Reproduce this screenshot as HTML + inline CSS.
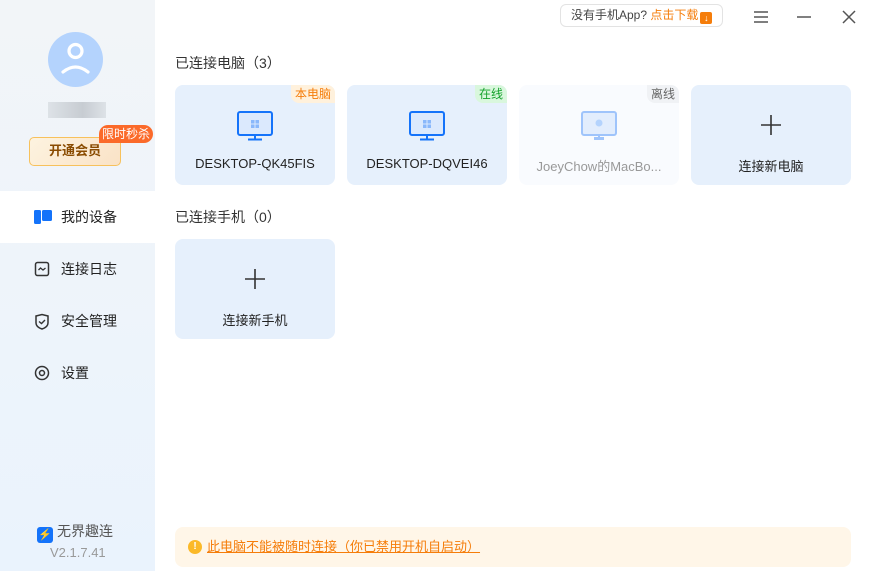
<!DOCTYPE html>
<html><head><meta charset="utf-8"><style>
*{margin:0;padding:0;box-sizing:border-box}
body{width:872px;height:571px;overflow:hidden;background:#fff;font-family:"Liberation Sans","Noto Sans CJK SC",sans-serif;position:relative;color:#222}
.side{position:absolute;left:0;top:0;width:155px;height:571px;background:linear-gradient(#f2f5f8,#eaf3fd)}
.abs{position:absolute}
.card{position:absolute;width:160px;height:100px;border-radius:8px;background:#e6f0fc;text-align:center}
.card .name{position:absolute;left:0;right:0;top:71px;font-size:13px;color:#222}
.tag{position:absolute;right:0;top:0;font-size:12px;padding:0 4px;height:18px;line-height:18px;border-radius:0 8px 0 8px}
.nav{position:absolute;left:0;width:155px;height:52px;font-size:14px;line-height:52px;padding-left:61px;color:#222}
.nav svg{position:absolute;left:34px;top:18px}
.h{position:absolute;left:175px;font-size:14px;color:#333}
</style></head><body>
<div class="side"></div>
<svg class="abs" style="left:48px;top:32px" width="55" height="55" viewBox="0 0 55 55"><circle cx="27.5" cy="27.5" r="27.5" fill="#b4d3fd"/><circle cx="27.5" cy="19" r="6.5" fill="none" stroke="#fff" stroke-width="3.2"/><path d="M15 40 Q27.5 30 40 40" fill="none" stroke="#fff" stroke-width="3.2" stroke-linecap="round"/></svg>
<div class="abs" style="left:48px;top:102px;width:58px;height:16px;background:linear-gradient(90deg,#dde2e7,#c7ccd2 60%,#dde2e7)"></div>
<div class="abs" style="left:29px;top:137px;width:92px;height:29px;border:1.5px solid #f7c15c;border-radius:5px;background:linear-gradient(135deg,#fdf3e0,#fae2c6);color:#8a4b00;font-size:13px;font-weight:bold;text-align:center;line-height:26px">开通会员</div>
<div class="abs" style="left:99px;top:125px;width:54px;height:18px;background:#fb6a2a;color:#fff;font-size:12px;line-height:18px;text-align:center;border-radius:9px 9px 9px 0">限时秒杀</div>
<div class="nav" style="top:191px;background:#fff"><svg width="18" height="16" viewBox="0 0 18 16"><rect x="0" y="1" width="7" height="14" rx="1.5" fill="#1473fa"/><rect x="8" y="1" width="10" height="11" rx="1.5" fill="#1473fa"/></svg>我的设备</div>
<div class="nav" style="top:243px"><svg width="16" height="16" viewBox="0 0 16 16"><rect x="1.5" y="1.5" width="13" height="13" rx="2" fill="none" stroke="#333" stroke-width="1.5"/><path d="M4.5 9 L6.5 7 L9 9 L11.5 7" fill="none" stroke="#333" stroke-width="1.3"/></svg>连接日志</div>
<div class="nav" style="top:295px"><svg width="16" height="17" viewBox="0 0 16 17"><path d="M2 3 L8 1.5 L14 3 V10 Q14 14 8 16 Q2 14 2 10Z" fill="none" stroke="#333" stroke-width="1.5"/><path d="M5 8.5 L7.5 10.5 L11 7" fill="none" stroke="#333" stroke-width="1.4"/></svg>安全管理</div>
<div class="nav" style="top:347px"><svg width="16" height="16" viewBox="0 0 16 16"><circle cx="8" cy="8" r="6.5" fill="none" stroke="#333" stroke-width="1.5"/><circle cx="8" cy="8" r="2.5" fill="none" stroke="#333" stroke-width="1.5"/></svg>设置</div>
<div class="abs" style="left:37px;top:522px;font-size:14px;color:#555;line-height:18px"><span style="display:inline-block;width:16px;height:16px;background:#1473fa;border-radius:3px;vertical-align:-2px;margin-right:4px;color:#fff;font-size:11px;text-align:center;line-height:16px">⚡</span>无界趣连</div>
<div class="abs" style="left:50px;top:545px;font-size:13px;color:#999">V2.1.7.41</div>

<div class="abs" style="left:560px;top:4px;width:163px;height:23px;border:1px solid #e3e3e3;border-radius:6px;font-size:12px;line-height:21px;padding-left:10px;color:#444">没有手机App? <span style="color:#f57d0a">点击下载</span><span style="display:inline-block;width:12px;height:12px;background:#f57d0a;border-radius:2px;vertical-align:-2px;margin-left:2px;color:#fff;font-size:9px;line-height:12px;text-align:center">↓</span></div>
<svg class="abs" style="left:754px;top:10px" width="14" height="14"><path d="M0 2H14M0 7H14M0 12H14" stroke="#555" stroke-width="1.5"/></svg>
<svg class="abs" style="left:797px;top:10px" width="14" height="14"><path d="M0 7H14" stroke="#555" stroke-width="1.5"/></svg>
<svg class="abs" style="left:842px;top:10px" width="14" height="14"><path d="M1 1L13 13M13 1L1 13" stroke="#555" stroke-width="1.5"/></svg>

<div class="h" style="top:53px">已连接电脑（3）</div>
<div class="card" style="left:175px;top:85px"><div class="tag" style="background:#fff1dc;color:#f57d0a">本电脑</div>
<svg class="abs" style="left:62px;top:26px" width="36" height="30" viewBox="0 0 36 30"><rect x="1" y="1" width="34" height="23" rx="2" fill="#dbe9fd" stroke="#1473fa" stroke-width="2"/><rect x="14" y="9" width="3.5" height="3.5" fill="#8ab8fb"/><rect x="18.5" y="9" width="3.5" height="3.5" fill="#8ab8fb"/><rect x="14" y="13.5" width="3.5" height="3.5" fill="#8ab8fb"/><rect x="18.5" y="13.5" width="3.5" height="3.5" fill="#8ab8fb"/><rect x="17" y="24" width="2" height="4" fill="#1473fa"/><rect x="11" y="27.5" width="14" height="2" fill="#1473fa"/></svg>
<div class="name">DESKTOP-QK45FIS</div></div>
<div class="card" style="left:347px;top:85px"><div class="tag" style="background:#d9f7dd;color:#16a32d">在线</div>
<svg class="abs" style="left:62px;top:26px" width="36" height="30" viewBox="0 0 36 30"><rect x="1" y="1" width="34" height="23" rx="2" fill="#dbe9fd" stroke="#1473fa" stroke-width="2"/><rect x="14" y="9" width="3.5" height="3.5" fill="#8ab8fb"/><rect x="18.5" y="9" width="3.5" height="3.5" fill="#8ab8fb"/><rect x="14" y="13.5" width="3.5" height="3.5" fill="#8ab8fb"/><rect x="18.5" y="13.5" width="3.5" height="3.5" fill="#8ab8fb"/><rect x="17" y="24" width="2" height="4" fill="#1473fa"/><rect x="11" y="27.5" width="14" height="2" fill="#1473fa"/></svg>
<div class="name">DESKTOP-DQVEI46</div></div>
<div class="card" style="left:519px;top:85px;background:#f9fbfe"><div class="tag" style="background:#f0f2f5;color:#666">离线</div>
<svg class="abs" style="left:62px;top:26px" width="36" height="30" viewBox="0 0 36 30"><rect x="1" y="1" width="34" height="23" rx="2" fill="#e2edfd" stroke="#9fc4fb" stroke-width="2"/><circle cx="18" cy="12" r="3.5" fill="#b4d3fd"/><rect x="17" y="24" width="2" height="4" fill="#9fc4fb"/><rect x="13" y="26" width="10" height="3" fill="#9fc4fb"/></svg>
<div class="name" style="color:#999">JoeyChow的MacBo...</div></div>
<div class="card" style="left:691px;top:85px"><svg class="abs" style="left:70px;top:30px" width="20" height="20"><path d="M10 0V20M0 10H20" stroke="#333" stroke-width="1.6"/></svg><div class="name">连接新电脑</div></div>

<div class="h" style="top:207px">已连接手机（0）</div>
<div class="card" style="left:175px;top:239px"><svg class="abs" style="left:70px;top:30px" width="20" height="20"><path d="M10 0V20M0 10H20" stroke="#333" stroke-width="1.6"/></svg><div class="name">连接新手机</div></div>

<div class="abs" style="left:175px;top:527px;width:676px;height:40px;background:#fff6e8;border-radius:8px;font-size:13px;line-height:40px;padding-left:32px;color:#f57d0a"><span style="position:absolute;left:13px;top:13px;width:14px;height:14px;border-radius:50%;background:#fbb928;color:#fff;font-size:10px;font-weight:bold;line-height:14px;text-align:center">!</span><span style="text-decoration:underline">此电脑不能被随时连接（你已禁用开机自启动）</span></div>
</body></html>
